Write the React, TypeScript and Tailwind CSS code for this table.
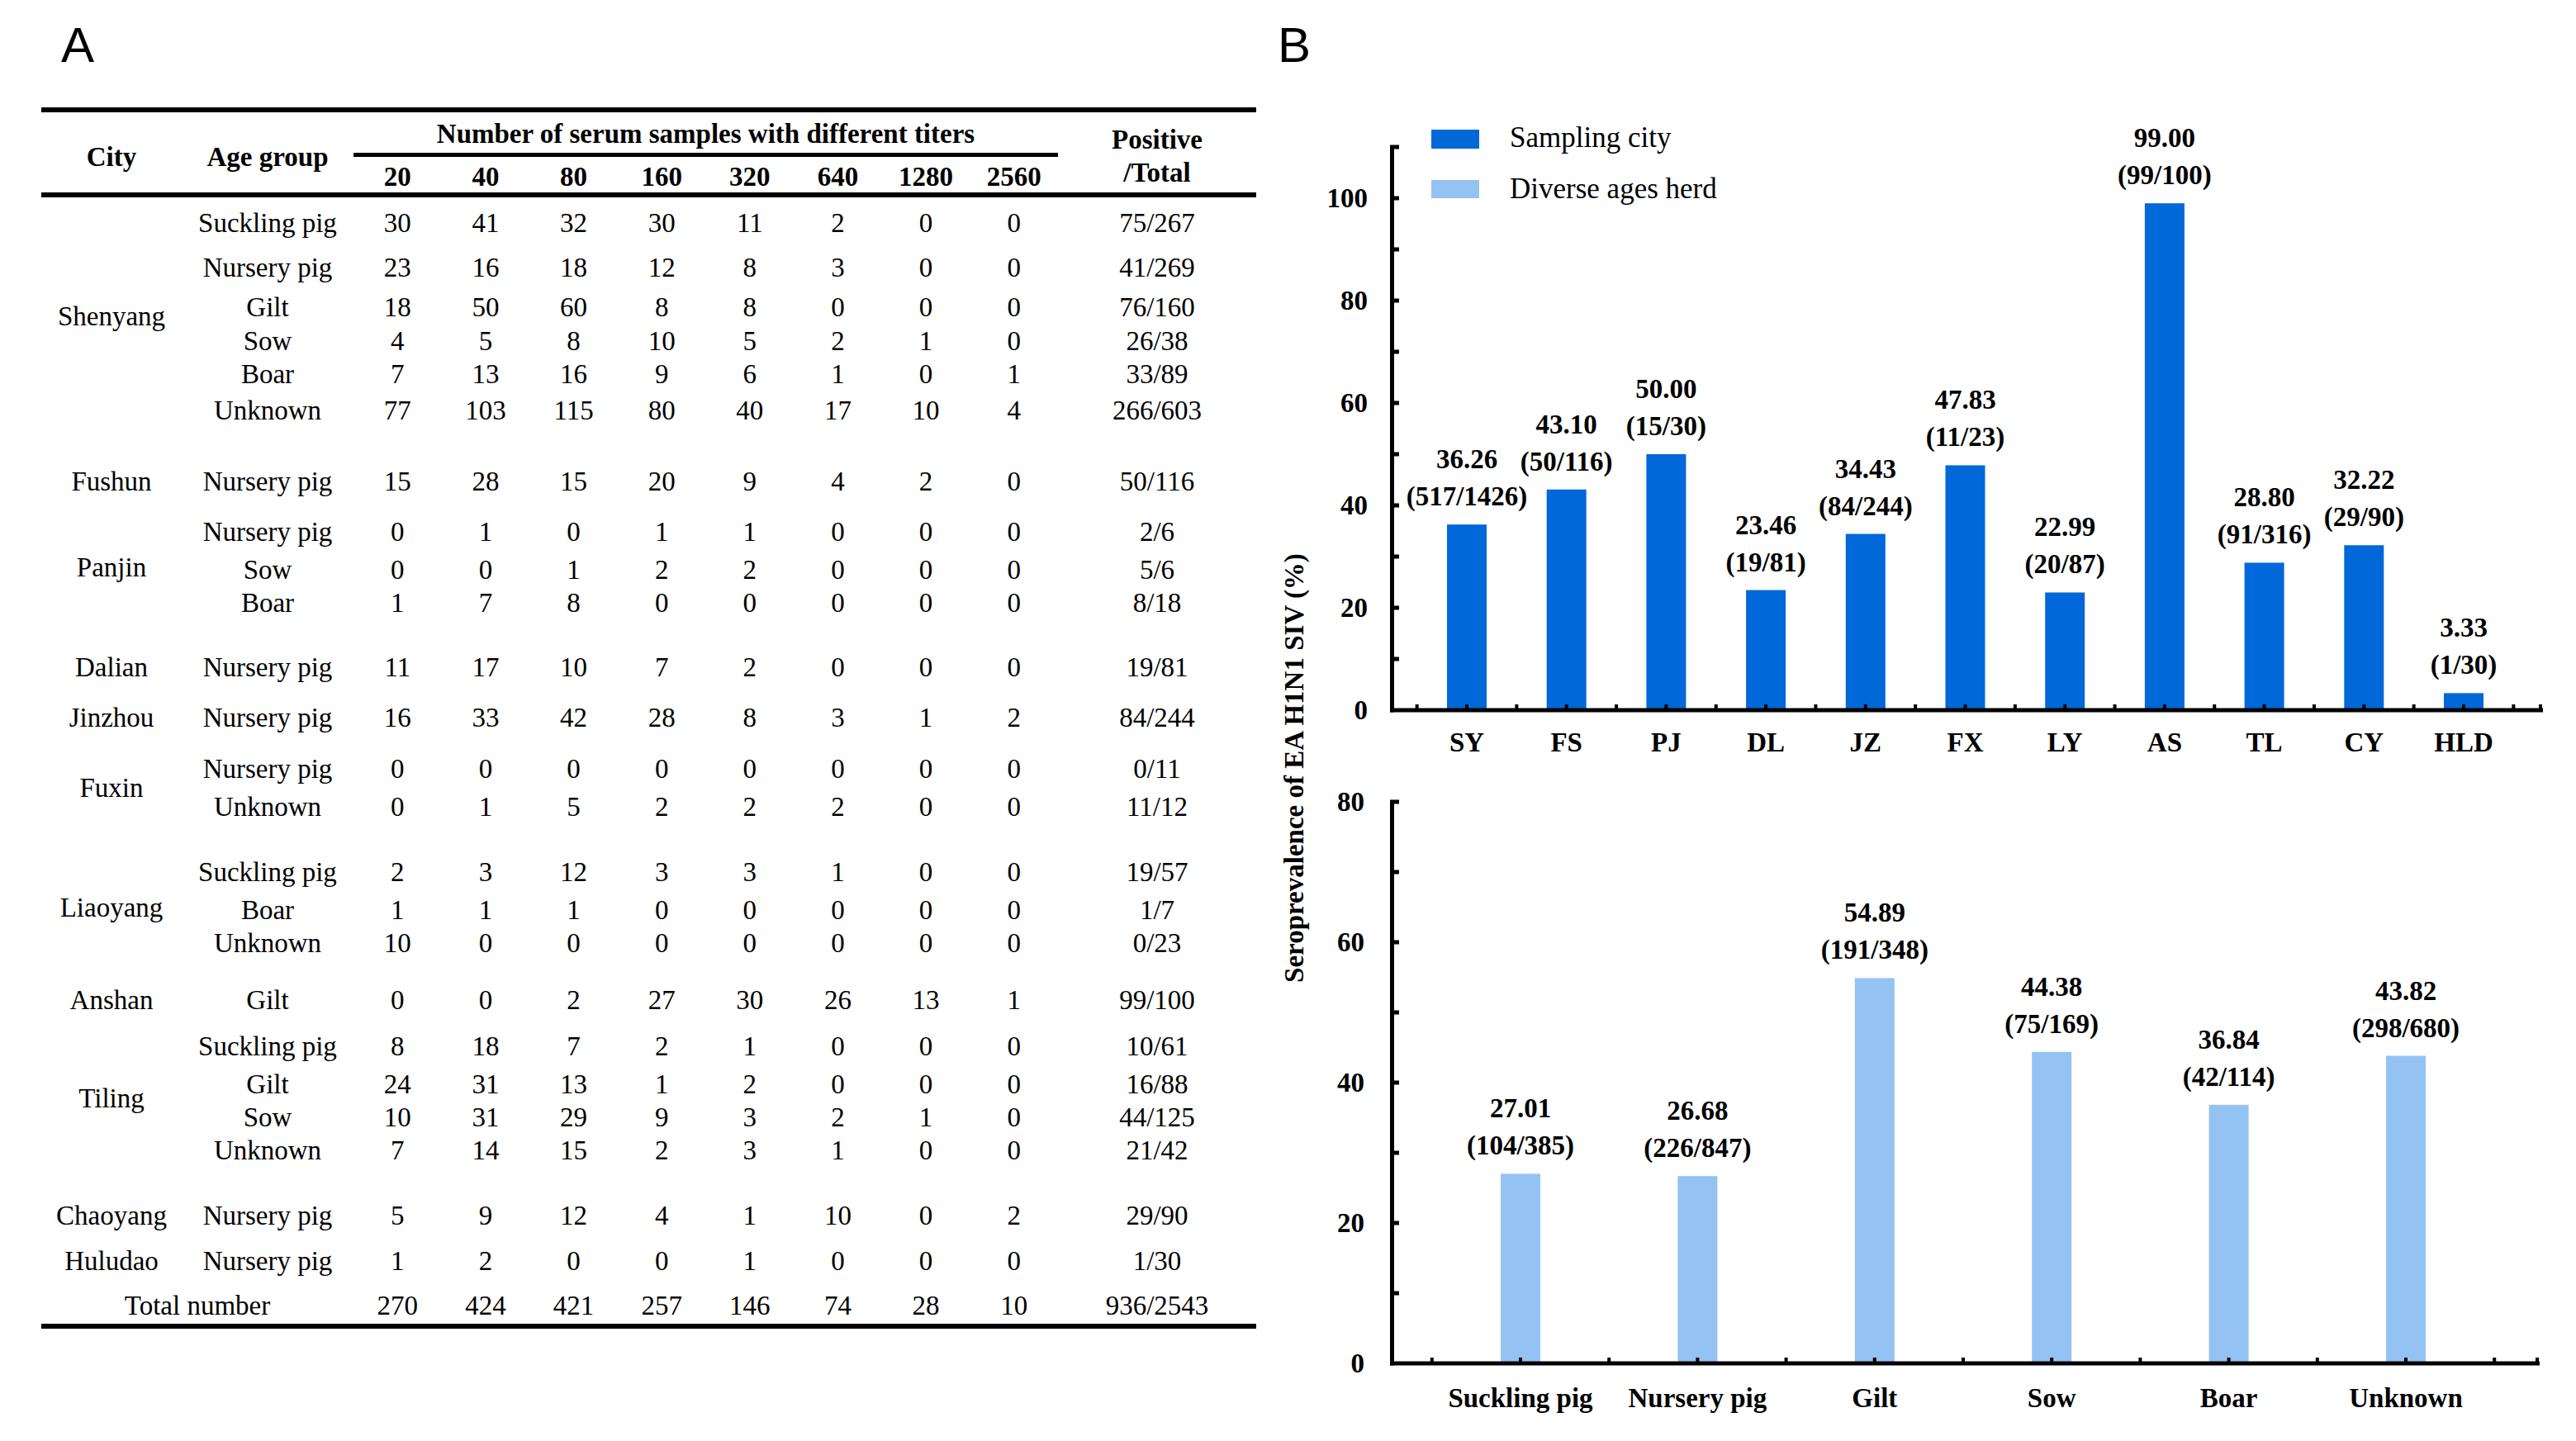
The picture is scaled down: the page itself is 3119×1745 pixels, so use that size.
import clsx from 'clsx';

// Panel A - titers table data
type Row = { age: string; v: string[]; pos: string; mt: string };
type Group = { city: string; mt: string; rows: Row[] };

const groups: Group[] = [
  {
    city: 'Shenyang',
    mt: 'mt-[11px]',
    rows: [
      { age: 'Suckling pig', v: ['30', '41', '32', '30', '11', '2', '0', '0'], pos: '75/267', mt: 'mt-0' },
      { age: 'Nursery pig', v: ['23', '16', '18', '12', '8', '3', '0', '0'], pos: '41/269', mt: 'mt-[14px]' },
      { age: 'Gilt', v: ['18', '50', '60', '8', '8', '0', '0', '0'], pos: '76/160', mt: 'mt-[8px]' },
      { age: 'Sow', v: ['4', '5', '8', '10', '5', '2', '1', '0'], pos: '26/38', mt: 'mt-[1px]' },
      { age: 'Boar', v: ['7', '13', '16', '9', '6', '1', '0', '1'], pos: '33/89', mt: 'mt-0' },
      { age: 'Unknown', v: ['77', '103', '115', '80', '40', '17', '10', '4'], pos: '266/603', mt: 'mt-[4px]' },
    ],
  },
  {
    city: 'Fushun',
    mt: 'mt-[46px]',
    rows: [{ age: 'Nursery pig', v: ['15', '28', '15', '20', '9', '4', '2', '0'], pos: '50/116', mt: 'mt-0' }],
  },
  {
    city: 'Panjin',
    mt: 'mt-[21px]',
    rows: [
      { age: 'Nursery pig', v: ['0', '1', '0', '1', '1', '0', '0', '0'], pos: '2/6', mt: 'mt-0' },
      { age: 'Sow', v: ['0', '0', '1', '2', '2', '0', '0', '0'], pos: '5/6', mt: 'mt-[6px]' },
      { age: 'Boar', v: ['1', '7', '8', '0', '0', '0', '0', '0'], pos: '8/18', mt: 'mt-0' },
    ],
  },
  {
    city: 'Dalian',
    mt: 'mt-[38px]',
    rows: [{ age: 'Nursery pig', v: ['11', '17', '10', '7', '2', '0', '0', '0'], pos: '19/81', mt: 'mt-0' }],
  },
  {
    city: 'Jinzhou',
    mt: 'mt-[21px]',
    rows: [{ age: 'Nursery pig', v: ['16', '33', '42', '28', '8', '3', '1', '2'], pos: '84/244', mt: 'mt-0' }],
  },
  {
    city: 'Fuxin',
    mt: 'mt-[22px]',
    rows: [
      { age: 'Nursery pig', v: ['0', '0', '0', '0', '0', '0', '0', '0'], pos: '0/11', mt: 'mt-0' },
      { age: 'Unknown', v: ['0', '1', '5', '2', '2', '2', '0', '0'], pos: '11/12', mt: 'mt-[6px]' },
    ],
  },
  {
    city: 'Liaoyang',
    mt: 'mt-[39px]',
    rows: [
      { age: 'Suckling pig', v: ['2', '3', '12', '3', '3', '1', '0', '0'], pos: '19/57', mt: 'mt-0' },
      { age: 'Boar', v: ['1', '1', '1', '0', '0', '0', '0', '0'], pos: '1/7', mt: 'mt-[6px]' },
      { age: 'Unknown', v: ['10', '0', '0', '0', '0', '0', '0', '0'], pos: '0/23', mt: 'mt-0' },
    ],
  },
  {
    city: 'Anshan',
    mt: 'mt-[29px]',
    rows: [{ age: 'Gilt', v: ['0', '0', '2', '27', '30', '26', '13', '1'], pos: '99/100', mt: 'mt-0' }],
  },
  {
    city: 'Tiling',
    mt: 'mt-[16px]',
    rows: [
      { age: 'Suckling pig', v: ['8', '18', '7', '2', '1', '0', '0', '0'], pos: '10/61', mt: 'mt-0' },
      { age: 'Gilt', v: ['24', '31', '13', '1', '2', '0', '0', '0'], pos: '16/88', mt: 'mt-[6px]' },
      { age: 'Sow', v: ['10', '31', '29', '9', '3', '2', '1', '0'], pos: '44/125', mt: 'mt-0' },
      { age: 'Unknown', v: ['7', '14', '15', '2', '3', '1', '0', '0'], pos: '21/42', mt: 'mt-0' },
    ],
  },
  {
    city: 'Chaoyang',
    mt: 'mt-[39px]',
    rows: [{ age: 'Nursery pig', v: ['5', '9', '12', '4', '1', '10', '0', '2'], pos: '29/90', mt: 'mt-0' }],
  },
  {
    city: 'Huludao',
    mt: 'mt-[15px]',
    rows: [{ age: 'Nursery pig', v: ['1', '2', '0', '0', '1', '0', '0', '0'], pos: '1/30', mt: 'mt-0' }],
  },
];

const totals = ['270', '424', '421', '257', '146', '74', '28', '10'];
const titers = ['20', '40', '80', '160', '320', '640', '1280', '2560'];

function DataRow({ r }: { r: Row }) {
  return (
    <div className={clsx('grid h-[40px] grid-cols-[208px_repeat(8,106.625px)_240px] items-center text-center leading-none', r.mt)}>
      <div>{r.age}</div>
      {r.v.map((x, i) => (
        <div key={i}>{x}</div>
      ))}
      <div>{r.pos}</div>
    </div>
  );
}

function TiterTable() {
  return (
    <div className="ml-[50px] mt-[45px] w-[1471px] border-t-[6px] border-black text-[33px] text-black font-['Liberation_Serif','Times_New_Roman',serif]">
      {/* header */}
      <div className="grid h-[103px] grid-cols-[170px_208px_repeat(8,106.625px)_240px] grid-rows-[54px_49px] border-b-[6px] border-black font-bold leading-none">
        <div className="col-start-1 row-span-2 row-start-1 pt-[38px] text-center">City</div>
        <div className="col-start-2 row-span-2 row-start-1 pt-[38px] text-center">Age group</div>
        <div className="col-span-8 col-start-3 row-start-1 whitespace-nowrap border-b-[5px] border-black pt-[10px] text-center">
          Number of serum samples with different titers
        </div>
        {titers.map((t) => (
          <div key={t} className="row-start-2 pt-[8px] text-center">
            {t}
          </div>
        ))}
        <div className="col-start-11 row-span-2 row-start-1 pt-[13px] text-center leading-[40px]">
          Positive
          <br />
          /Total
        </div>
      </div>

      {/* body */}
      {groups.map((g) => (
        <div key={g.city} className={clsx('flex', g.mt)}>
          <div className="flex w-[170px] items-center justify-center leading-none">{g.city}</div>
          <div className="flex flex-col">
            {g.rows.map((r, i) => (
              <DataRow key={i} r={r} />
            ))}
          </div>
        </div>
      ))}

      <div className="mt-[14px] grid h-[40px] grid-cols-[378px_repeat(8,106.625px)_240px] items-center text-center leading-none">
        <div>Total number</div>
        {totals.map((t, i) => (
          <div key={i}>{t}</div>
        ))}
        <div>936/2543</div>
      </div>
      <div className="mt-[2px] border-b-[6px] border-black" />
    </div>
  );
}

// Panel B - bar charts
const DARK = '#0068d8';
const LIGHT = '#94c2f2';
const FONT = 'Liberation Serif, Times New Roman, serif';

const cityBars: [string, number, string][] = [
  ['SY', 36.26, '(517/1426)'],
  ['FS', 43.1, '(50/116)'],
  ['PJ', 50.0, '(15/30)'],
  ['DL', 23.46, '(19/81)'],
  ['JZ', 34.43, '(84/244)'],
  ['FX', 47.83, '(11/23)'],
  ['LY', 22.99, '(20/87)'],
  ['AS', 99.0, '(99/100)'],
  ['TL', 28.8, '(91/316)'],
  ['CY', 32.22, '(29/90)'],
  ['HLD', 3.33, '(1/30)'],
];

const ageBars: [string, number, string][] = [
  ['Suckling pig', 27.01, '(104/385)'],
  ['Nursery pig', 26.68, '(226/847)'],
  ['Gilt', 54.89, '(191/348)'],
  ['Sow', 44.38, '(75/169)'],
  ['Boar', 36.84, '(42/114)'],
  ['Unknown', 43.82, '(298/680)'],
];

type ChartCfg = {
  bars: [string, number, string][];
  color: string;
  x0: number; // first bar centre
  step: number;
  base: number; // y of value 0
  k: number; // px per unit
  max: number;
  labelStep: number;
  axisEnd: number;
  endTick: number;
  labelX: number;
  catY: number;
};

function BarChart({ c }: { c: ChartCfg }) {
  const yOf = (v: number) => c.base - v * c.k;
  const minor: number[] = [];
  for (let v = 10; v <= c.max; v += 10) minor.push(v);
  const labels: number[] = [];
  for (let v = 0; v <= c.max; v += c.labelStep) labels.push(v);
  const ticksX: number[] = [];
  for (let i = 0; i <= c.bars.length * 2; i++) ticksX.push(c.x0 - c.step / 2 + (i * c.step) / 2);

  return (
    <g fontFamily={FONT} fontWeight="bold" fontSize={33} fill="#000">
      {/* y axis */}
      <rect x={1683} y={yOf(c.max) - 2.5} width={5} height={c.base - yOf(c.max) + 5} fill="#000" />
      {minor.map((v) => (
        <rect key={v} x={1688} y={yOf(v) - 2.5} width={6} height={5} fill="#000" />
      ))}
      {labels.map((v) => (
        <text key={v} x={c.labelX} y={yOf(v) + 11} textAnchor="end">
          {v}
        </text>
      ))}
      {/* bars */}
      {c.bars.map(([name, v, frac], i) => {
        const cx = c.x0 + i * c.step;
        const top = yOf(v);
        return (
          <g key={name}>
            <rect x={cx - 24} y={top} width={48} height={c.base - top} fill={c.color} />
            <text x={cx} y={top - 68} textAnchor="middle">
              {v.toFixed(2)}
            </text>
            <text x={cx} y={top - 23} textAnchor="middle">
              {frac}
            </text>
            <text x={cx} y={c.catY} textAnchor="middle">
              {name}
            </text>
          </g>
        );
      })}
      {/* x axis */}
      <rect x={1683} y={c.base - 2.5} width={c.axisEnd - 1683} height={5} fill="#000" />
      {ticksX.map((x, i) => (
        <rect key={i} x={x - 2} y={c.base - 7} width={4} height={5} fill="#000" />
      ))}
      <rect x={c.endTick - 2} y={c.base - 7} width={4} height={5} fill="#000" />
    </g>
  );
}

function Charts() {
  return (
    <svg width={1589} height={1645} viewBox="1530 100 1589 1645" className="mt-[15px] block">
      {/* legend */}
      <rect x={1733} y={157} width={58} height={23} fill={DARK} />
      <rect x={1733} y={218} width={58} height={22} fill={LIGHT} />
      <text x={1828} y={178} fontFamily={FONT} fontSize={35} fill="#000">
        Sampling city
      </text>
      <text x={1828} y={240} fontFamily={FONT} fontSize={35} fill="#000">
        Diverse ages herd
      </text>

      <BarChart
        c={{
          bars: cityBars,
          color: DARK,
          x0: 1776,
          step: 120.7,
          base: 860,
          k: 6.2,
          max: 110,
          labelStep: 20,
          axisEnd: 3079,
          endTick: 3076,
          labelX: 1656,
          catY: 910,
        }}
      />
      <BarChart
        c={{
          bars: ageBars,
          color: LIGHT,
          x0: 1841,
          step: 214.4,
          base: 1651,
          k: 8.5,
          max: 80,
          labelStep: 20,
          axisEnd: 3075,
          endTick: 3072,
          labelX: 1652,
          catY: 1704,
        }}
      />

      {/* y axis title */}
      <text
        x={1578}
        y={930}
        transform="rotate(-90 1578 930)"
        textAnchor="middle"
        fontFamily={FONT}
        fontWeight="bold"
        fontSize={33}
        fill="#000"
      >
        Seroprevalence of EA H1N1 SIV (%)
      </text>
    </svg>
  );
}

export default function App() {
  return (
    <div className="flex h-[1745px] w-[3119px] overflow-hidden bg-white text-black">
      <div className="flex w-[1530px] flex-col">
        <div className="ml-[74px] mt-[25px] h-[60px] text-[60px] leading-[60px] font-['Liberation_Sans',Arial,sans-serif]">A</div>
        <TiterTable />
      </div>
      <div className="flex flex-col">
        <div className="ml-[17px] mt-[25px] h-[60px] text-[60px] leading-[60px] font-['Liberation_Sans',Arial,sans-serif]">B</div>
        <Charts />
      </div>
    </div>
  );
}
